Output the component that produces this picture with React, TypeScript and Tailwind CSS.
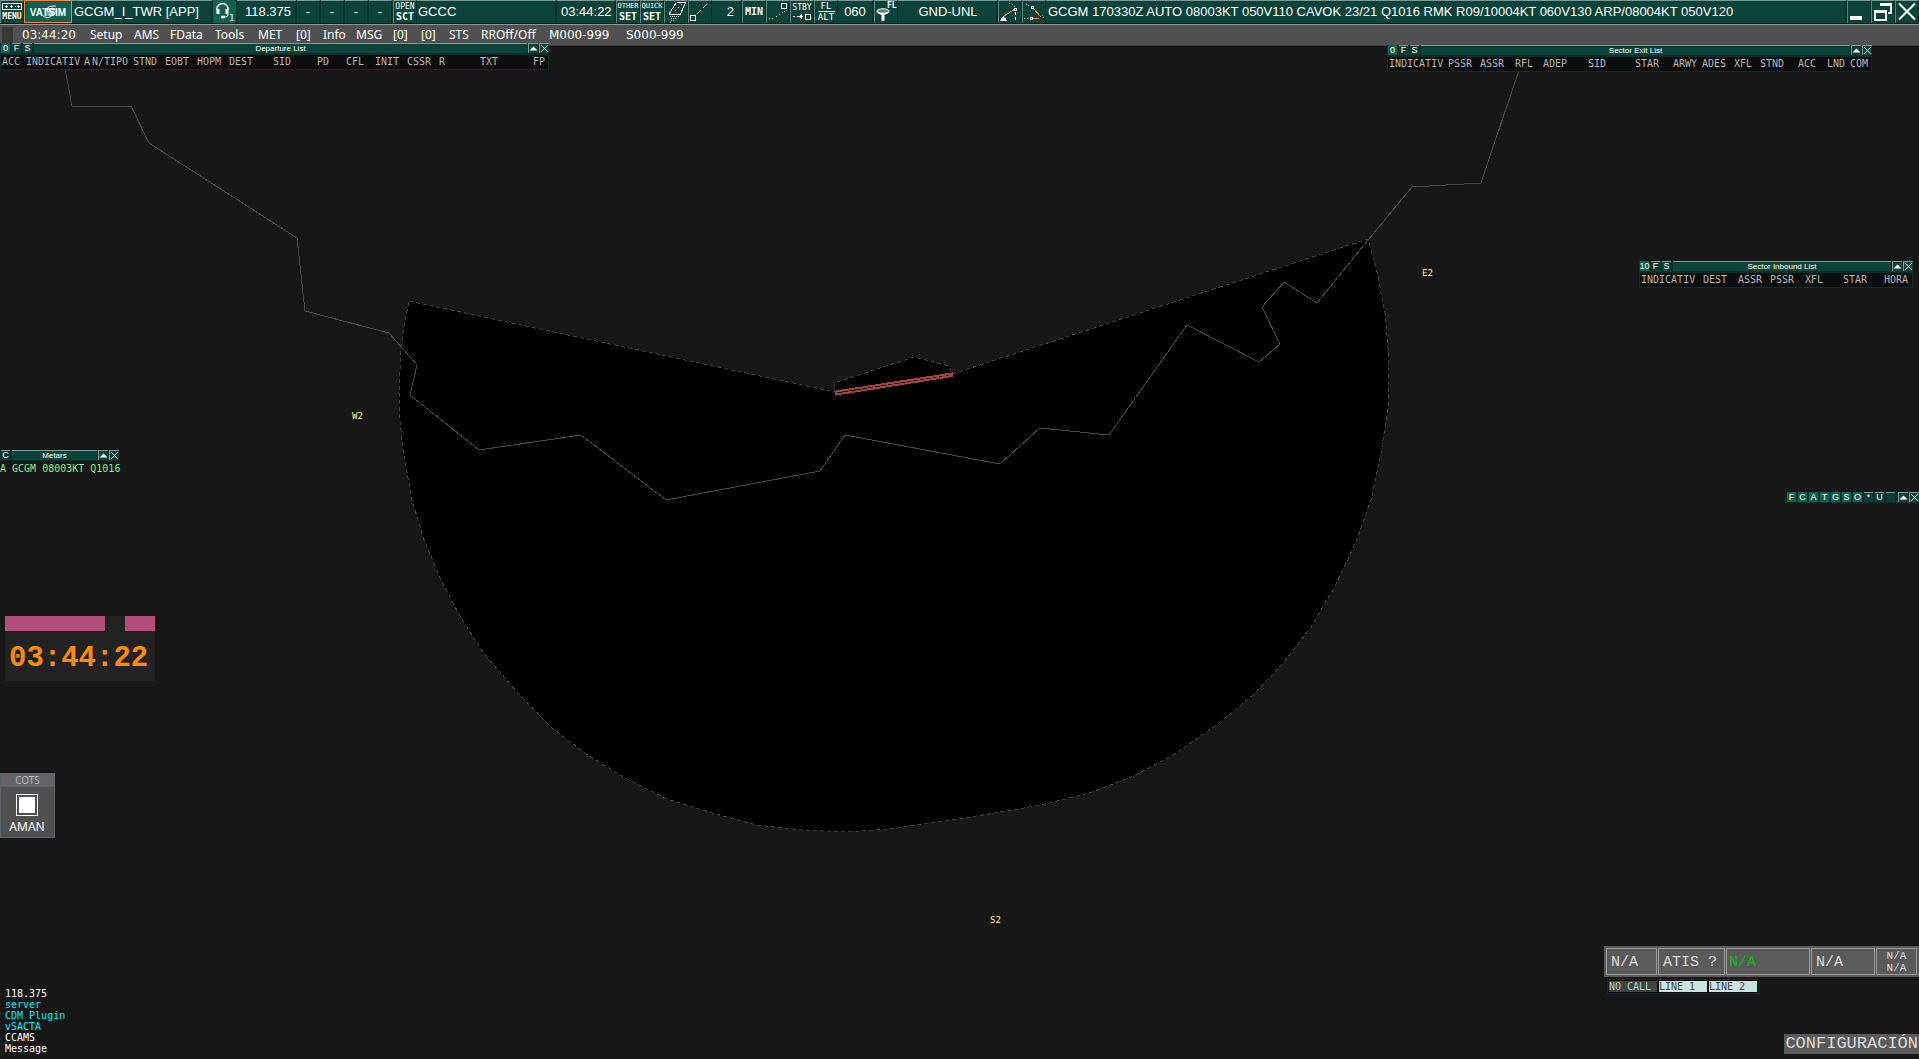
import type { ReactNode } from 'react'
import clsx from 'clsx'

interface Column {
  label: string
  width: string
}

const DEPARTURE_COLUMNS: Column[] = [
  { label: 'ACC', width: 'w-[24px]' },
  { label: 'INDICATIV', width: 'w-[58px]' },
  { label: 'A', width: 'w-[8px]' },
  { label: 'N/TIPO', width: 'w-[41px]' },
  { label: 'STND', width: 'w-[32px]' },
  { label: 'EOBT', width: 'w-[32px]' },
  { label: 'HOPM', width: 'w-[32px]' },
  { label: 'DEST', width: 'w-[44px]' },
  { label: 'SID', width: 'w-[44px]' },
  { label: 'PD', width: 'w-[29px]' },
  { label: 'CFL', width: 'w-[29px]' },
  { label: 'INIT', width: 'w-[32px]' },
  { label: 'CSSR', width: 'w-[32px]' },
  { label: 'R', width: 'w-[41px]' },
  { label: 'TXT', width: 'w-[53px]' },
  { label: 'FP', width: 'w-[15px]' },
]

const EXIT_COLUMNS: Column[] = [
  { label: 'INDICATIV', width: 'w-[59px]' },
  { label: 'PSSR', width: 'w-[32px]' },
  { label: 'ASSR', width: 'w-[35px]' },
  { label: 'RFL', width: 'w-[28px]' },
  { label: 'ADEP', width: 'w-[45px]' },
  { label: 'SID', width: 'w-[47px]' },
  { label: 'STAR', width: 'w-[38px]' },
  { label: 'ARWY', width: 'w-[29px]' },
  { label: 'ADES', width: 'w-[32px]' },
  { label: 'XFL', width: 'w-[26px]' },
  { label: 'STND', width: 'w-[38px]' },
  { label: 'ACC', width: 'w-[29px]' },
  { label: 'LND', width: 'w-[23px]' },
  { label: 'COM', width: 'w-[21px]' },
]

const INBOUND_COLUMNS: Column[] = [
  { label: 'INDICATIV', width: 'w-[62px]' },
  { label: 'DEST', width: 'w-[35px]' },
  { label: 'ASSR', width: 'w-[32px]' },
  { label: 'PSSR', width: 'w-[35px]' },
  { label: 'XFL', width: 'w-[38px]' },
  { label: 'STAR', width: 'w-[41px]' },
  { label: 'HORA', width: 'w-[28px]' },
]

const MENU_ITEMS = ['Setup', 'AMS', 'FData', 'Tools', 'MET', '[0]', 'Info', 'MSG', '[0]', '[0]', 'STS', 'RROff/Off']

const MESSAGES = [
  { text: '118.375', color: 'text-white' },
  { text: 'server', color: 'text-[#00f0f0]' },
  { text: 'CDM Plugin', color: 'text-[#00f0f0]' },
  { text: 'vSACTA', color: 'text-[#00f0f0]' },
  { text: 'CCAMS', color: 'text-white' },
  { text: 'Message', color: 'text-white' },
]

const FILTERS = ['F', 'C', 'A', 'T', 'G', 'S', 'O', '*', 'U', '']

const SANS = "font-['Liberation_Sans',sans-serif]"
const MONO = "font-['DejaVu_Sans_Mono',monospace]"
const COURIER = "font-['Liberation_Mono',monospace]"

/* ---------- top bar ---------- */

function Field({ width, children }: { width: string; children: ReactNode }) {
  return (
    <div className={clsx(width, 'flex items-center border-t border-r-2 border-t-[#7a9a93] border-r-[#06302a] bg-[#0c4339] pb-0.5 whitespace-nowrap')}>
      {children}
    </div>
  )
}

function Tool({ label, lit, children }: { label: string; lit?: boolean; children: ReactNode }) {
  return (
    <button
      aria-label={label}
      className={clsx(
        MONO,
        'flex w-6 shrink-0 flex-col items-center justify-center overflow-hidden border-r border-r-[#06302a]',
        lit ? 'bg-[#12604f]' : 'border-t border-l border-t-[#7a9a93] border-l-[#5e837b] bg-[#0c4339]'
      )}
    >
      {children}
    </button>
  )
}

function Icon({ children }: { children: ReactNode }) {
  return (
    <svg viewBox="0 0 22 22" className="h-[22px] w-[22px] shrink-0" fill="none" stroke="#fff" strokeWidth="1" shapeRendering="crispEdges">
      {children}
    </svg>
  )
}

function TopBar() {
  return (
    <header className={clsx(SANS, 'flex h-[23px] bg-[#06302a] text-[13px] leading-none text-white')}>
      <Tool label="Menu">
        <svg viewBox="0 0 20 8" className="h-2 w-5" fill="none" stroke="#fff" shapeRendering="crispEdges">
          <rect x="0.5" y="0.5" width="19" height="6" />
          <path d="M3 3.5h3M8 3.5h3M13 3.5h1M15 3.5h3M4.5 2v3M9.5 2v3M16.5 2v3" />
        </svg>
        <span className="mt-px text-[8px] leading-[9px] font-bold">MENU</span>
      </Tool>
      <button className="w-12 shrink-0 border border-[#f5873d] bg-[#12604f]" aria-label="VATSIM">
        <svg viewBox="0 0 46 21" className="h-[21px] w-[46px]">
          <ellipse cx="26" cy="11" rx="6" ry="4" fill="#a9cdc4" opacity="0.6" transform="rotate(-25 26 11)" />
          <text x="23" y="15" textAnchor="middle" fontSize="10" fontWeight="700" fill="#fff">VATSIM</text>
          <path d="M18 15c4 3 10 1 9-2s-6-2-5-5 5-3 9-3M20 9c3-1 7-2 10-1" fill="none" stroke="#fff" />
        </svg>
      </button>
      <Field width="w-[141px] pl-0.5">GCGM_I_TWR [APP]</Field>
      <Tool label="Voice" lit>
        <svg viewBox="0 0 22 22" className="h-[22px] w-[22px]" fill="none" stroke="#fff">
          <path d="M3 9V8a5.500 5.500 0 0 1 11 0v1" strokeWidth="1.500" />
          <path d="M4 8v5M13 8v5" strokeWidth="3" />
          <path d="M14 13v1c0 1.500-2 2-4 2" strokeWidth="1" />
          <path d="M7 16h4" strokeWidth="2.500" />
          <text x="15" y="20" fontSize="9" fill="#fff" stroke="none">1</text>
        </svg>
      </Tool>
      <Field width="w-[60px] pl-2">118.375</Field>
      <Field width="w-6 justify-center">-</Field>
      <Field width="w-6 justify-center">-</Field>
      <Field width="w-6 justify-center">-</Field>
      <Field width="w-6 justify-center">-</Field>
      <Tool label="Open sector file">
        <span className="text-[8px] leading-[9px]">OPEN</span>
        <span className="text-[10px] leading-[11px] font-bold">SCT</span>
      </Tool>
      <Field width="w-[140px] pl-px">GCCC</Field>
      <Field width="w-[59px] pl-1">03:44:22</Field>
      <Tool label="Other settings">
        <span className="text-[7px] leading-[9px]">OTHER</span>
        <span className="text-[10px] leading-[11px] font-bold">SET</span>
      </Tool>
      <Tool label="Quick settings">
        <span className="text-[7px] leading-[9px]">QUICK</span>
        <span className="text-[10px] leading-[11px] font-bold">SET</span>
      </Tool>
      <Tool label="Map layers">
        <Icon>
          <path d="M11.500 1.500h9M20.500 1.500L15.500 13M4 13l7-11" />
          <path d="M10 10L17 3" strokeDasharray="2 2" />
          <path d="M4 13.500h12" />
          <path d="M5 15.500h10M6 17.500h6M6 19.500h3M5 21.500h2" strokeDasharray="1 1" />
        </Icon>
      </Tool>
      <Tool label="Leader line">
        <Icon>
          <rect x="1.500" y="14.500" width="5" height="5" />
          <path d="M8 13L19 2" strokeDasharray="6 2" />
        </Icon>
      </Tool>
      <Field width="w-[30px] justify-end pr-1.5">2</Field>
      <Tool label="Minutes">
        <span className="text-[10px] font-bold">MIN</span>
      </Tool>
      <Tool label="History dots">
        <Icon>
          <rect x="14.500" y="2.500" width="5" height="5" />
          <path d="M2 17.500h1M5 17.500h1M9 15.500h1M12 13.500h1M15 11.500h1M17 10.500h1" />
        </Icon>
      </Tool>
      <Tool label="Standby">
        <span className="text-[8px] leading-[9px]">STBY</span>
        <svg viewBox="0 0 20 9" className="h-[9px] w-5" fill="none" stroke="#fff" shapeRendering="crispEdges">
          <path d="M1 4.500h2M5 4.500h6M9.500 2v5M8.500 3v3" />
          <rect x="13.500" y="2.500" width="5" height="5" />
        </svg>
      </Tool>
      <Tool label="Flight level or altitude">
        <span className="text-[9px] leading-[9px]">FL</span>
        <span className="w-[17px] border-t border-white pt-px text-center text-[9px] leading-[9px]">ALT</span>
      </Tool>
      <Field width="w-9 justify-center">060</Field>
      <Tool label="Level filter">
        <svg viewBox="0 0 22 22" className="h-[22px] w-[22px]">
          <path d="M1.500 10.500C1.500 13 6 13 6.500 14v6h3v-6c.5-1 5-1 5-3.500z" fill="#fff" />
          <ellipse cx="8" cy="10" rx="6" ry="2.200" fill="#5e837b" stroke="#fff" />
          <text x="12" y="7" fontSize="8" fontWeight="700" fill="#fff">FL</text>
        </svg>
      </Tool>
      <Field width="w-[100px] justify-center pl-0.5">GND-UNL</Field>
      <Tool label="Distance tool">
        <Icon>
          <path d="M5 15L16 8" stroke="#f5873d" />
          <path d="M1 19.500h7M2 18.500h5M2 17.500h5M3 16.500h3M4 15.500h1" />
          <rect x="15.500" y="7.500" width="2" height="2" />
          <path d="M16.500 11v9" strokeDasharray="3 2" />
          <path d="M10 2.500h1M13 3.500h1M15 5.500h1" />
        </Icon>
      </Tool>
      <Tool label="Conflict tool">
        <Icon>
          <path d="M11 8l6 7" stroke="#f5873d" />
          <path d="M10 17.500h6M17 15.500h1M19 14.500h1M20 16.500h1" stroke="#f5873d" />
          <rect x="8.500" y="5.500" width="2" height="2" />
          <rect x="7.500" y="16.500" width="2" height="2" />
          <path d="M3 3.500h1M5 4.500h1M1 17.500h1M4 17.500h1" />
        </Icon>
      </Tool>
      <Field width="min-w-0 flex-1 overflow-hidden pl-0.5">
        GCGM 170330Z AUTO 08003KT 050V110 CAVOK 23/21 Q1016 RMK R09/10004KT 060V130 ARP/08004KT 050V120
      </Field>
      <Tool label="Minimize">
        <Icon>
          <path d="M2 17h12" strokeWidth="4" />
        </Icon>
      </Tool>
      <Tool label="Restore">
        <Icon>
          <path d="M9 5V3h10v9h-3" strokeWidth="2" />
          <path d="M9 3h11" strokeWidth="3" />
          <rect x="3" y="10" width="11" height="9" strokeWidth="2" />
          <path d="M2 10h13" strokeWidth="3" />
        </Icon>
      </Tool>
      <Tool label="Close">
        <svg viewBox="0 0 22 22" className="h-[22px] w-[22px]" stroke="#fff" strokeWidth="2">
          <path d="M3 2.500l16 16M19 2.500l-16 16" />
        </svg>
      </Tool>
    </header>
  )
}

function MenuBar() {
  return (
    <nav
      className="grid h-[22px] grid-cols-[20px_68px_44px_36px_45px_43px_38px_27px_33px_37px_28px_28px_32px_68px_77px_auto] items-center justify-items-start border-t border-b border-t-[#8b9a97] border-b-[#3c3c3c] bg-[#505050] pl-0.5 font-['Noto_Sans',sans-serif] text-[12px] leading-4 whitespace-nowrap text-white"
    >
      <span className="h-4 w-[11px] bg-[#383838]" />
      <span className="font-['DejaVu_Sans',sans-serif]">03:44:20</span>
      {MENU_ITEMS.map((item, i) => (
        <button key={i}>{item}</button>
      ))}
      <button className="font-['DejaVu_Sans',sans-serif]">M000-999</button>
      <button className="font-['DejaVu_Sans',sans-serif]">S000-999</button>
    </nav>
  )
}

/* ---------- floating windows ---------- */

function TitleButton({ label, lit }: { label: string; lit?: boolean }) {
  return (
    <button
      className={clsx(
        'mr-[2px] flex h-[10px] w-[9px] items-center justify-center text-[9px] leading-[9px]',
        lit ? 'bg-[#12604f]' : 'border-t border-[#7a9a93] bg-[#0a3c33]'
      )}
    >
      {label}
    </button>
  )
}

function WindowButtons() {
  return (
    <>
      <button aria-label="Collapse" className="ml-px h-[10px] w-[10px] border-t border-l border-[#7a9a93] bg-[#0c4339]">
        <svg viewBox="0 0 9 9" className="h-[9px] w-[9px]" fill="#fff">
          <path d="M0.500 6.500L4.500 2.500L8.500 6.500z" />
        </svg>
      </button>
      <button aria-label="Close" className="ml-px h-[10px] w-[10px] border-t border-l border-[#7a9a93] bg-[#0c4339]">
        <svg viewBox="0 0 9 9" className="h-[9px] w-[9px]" stroke="#fff">
          <path d="M1 1l7 7M8 1l-7 7" />
        </svg>
      </button>
    </>
  )
}

function TitleBar({ title, flags }: { title: string; flags: { label: string; lit?: boolean }[] }) {
  return (
    <div className={clsx(SANS, 'flex h-[11px] bg-[#06302a] pl-px text-[8px] leading-[9px] text-white')}>
      {flags.map((flag) => (
        <TitleButton key={flag.label} {...flag} />
      ))}
      <span className="h-[10px] flex-1 border-t border-[#7a9a93] bg-[#0c4339] text-center leading-[9px]">{title}</span>
      <WindowButtons />
    </div>
  )
}

function ListWindow({ title, count, columns, className }: { title: string; count: string; columns: Column[]; className: string }) {
  return (
    <section className={clsx('absolute', className)}>
      <TitleBar title={title} flags={[{ label: count, lit: true }, { label: 'F' }, { label: 'S' }]} />
      <div className="border border-[#06302a] bg-[#0d0d0d] pl-px">
        <table className={clsx(MONO, 'table-fixed border-collapse text-[10px] leading-[14px] text-[#b4b4b0]')}>
          <thead>
            <tr>
              {columns.map((col) => (
                <th key={col.label} className={clsx(col.width, 'p-0 text-left font-normal whitespace-nowrap')}>
                  {col.label}
                </th>
              ))}
            </tr>
          </thead>
        </table>
      </div>
    </section>
  )
}

/* ---------- radar ---------- */

function RadarMap() {
  return (
    <svg viewBox="0 0 1919 1059" className="absolute inset-0 h-full w-full" fill="none" shapeRendering="crispEdges">
      {/* control zone */}
      <path
        d="M409 301L835 392L834 383L914 357L949 366L952 374L1368 239L1377 272L1385 313L1389 360L1388 407L1381 453L1371 500L1356 542L1334 588L1311 627L1284 662L1253 695L1214 727L1173 755L1134 776L1089 793L1041 805L989 814L931 823L889 829L844 832L802 830L757 825L712 813L667 799L625 778L586 754L551 727L516 691L483 652L461 618L440 578L423 537L412 500L403 450L400 420L399 393L401 348L404 326Z"
        fill="#000"
        stroke="#404040"
        strokeDasharray="4 3"
      />
      {/* coast line */}
      <path
        d="M65 68L72 106H131L149 143L297 238L305 311L389 333L417 365L410 395L479 450L581 435L666 500L820 471L845 435L1000 464L1040 428L1109 435L1187 325L1259 362L1280 344L1262 307L1284 282L1317 303L1368 240L1412 187L1481 183L1519 70"
        stroke="#484848"
      />
      {/* runway */}
      <path d="M836 391.500L952 373.500V376L836 394.500Z" stroke="#a64444" strokeWidth="2" />
      <g fill="#ffff80" fontFamily="'DejaVu Sans Mono', monospace" fontSize="9">
        <text x="1422" y="276">E2</text>
        <text x="352" y="419">W2</text>
        <text x="990" y="923">S2</text>
      </g>
    </svg>
  )
}

function AtisCell({ className, children }: { className: string; children: ReactNode }) {
  return <button className={clsx('flex items-center border border-[#999] pt-0.5 text-[15px] leading-none', className)}>{children}</button>
}

export default function App() {
  return (
    <div className="relative min-h-screen overflow-hidden bg-[#171717]">
      <RadarMap />

      <div className="relative">
        <TopBar />
        <div className="h-px bg-[#041f1b]" />
        <MenuBar />
      </div>

      <ListWindow title="Departure List" count="0" columns={DEPARTURE_COLUMNS} className="top-[43px] left-0" />
      <ListWindow title="Sector Exit List" count="0" columns={EXIT_COLUMNS} className="top-[45px] right-[47px]" />
      <ListWindow title="Sector Inbound List" count="10" columns={INBOUND_COLUMNS} className="top-[261px] right-[6px]" />

      <section className="absolute top-[450px] left-0 w-[119px]">
        <TitleBar title="Metars" flags={[{ label: 'C' }]} />
        <p className={clsx(MONO, 'mt-px text-[10px] leading-[14px] whitespace-nowrap text-[#86f28c]')}>A GCGM 08003KT Q1016</p>
      </section>

      <section className={clsx(SANS, 'absolute top-[492px] right-0 flex h-[11px] bg-[#06302a] pl-0.5 text-white')}>
        {FILTERS.map((f, i) => (
          <TitleButton key={i} label={f} lit={i < 7} />
        ))}
        <WindowButtons />
      </section>

      <section className="absolute top-[616px] left-[5px] w-[150px] bg-[#222]">
        <div className="flex h-[15px] justify-between">
          <span className="w-[100px] bg-[#b34e79]" />
          <span className="w-[30px] bg-[#b34e79]" />
        </div>
        <time className={clsx(COURIER, 'block h-[50px] pl-1 text-[29px] leading-[56px] font-bold text-[#ff8c00]')}>03:44:22</time>
      </section>

      <section className="absolute top-[773px] left-0 w-[55px] border border-[#5a6468] bg-[#505050] font-['Noto_Sans',sans-serif]">
        <h2 className="border-b border-[#5a6468] bg-[#646367] text-center text-[10px] leading-3 text-[#b8b8b4]">COTS</h2>
        <label className="flex flex-col items-center pt-[7px] pr-px text-[12px] leading-[21px] text-white">
          <input type="checkbox" className="h-[22px] w-[22px] appearance-none border border-white bg-white bg-clip-content p-0.5" />
          <span>AMAN</span>
        </label>
      </section>

      <ul className={clsx(MONO, 'absolute bottom-[5px] left-[5px] text-[10px] leading-[11px]')}>
        {MESSAGES.map((m) => (
          <li key={m.text} className={m.color}>{m.text}</li>
        ))}
      </ul>

      <section className={clsx(COURIER, 'absolute right-0 bottom-[5px] flex w-[315px] flex-col text-[#dcdcdc]')}>
        <div className="flex h-[31px] gap-px bg-[#5a5a5a] p-0.5">
          <AtisCell className="w-[51px] pl-1">N/A</AtisCell>
          <AtisCell className="w-[67px] pl-1">ATIS ?</AtisCell>
          <AtisCell className="w-[84px] pl-0.5 text-[#12b812]">N/A</AtisCell>
          <AtisCell className="w-16 pl-1">N/A</AtisCell>
          <button className="flex-1 border border-[#999] text-[11px] leading-3">
            N/A
            <br />
            N/A
          </button>
        </div>
        <div className={clsx(MONO, 'mt-0.5 ml-[3px] flex gap-0.5 self-start border border-[#06302a] bg-[#0d0d0d] p-px text-[10px] leading-[11px]')}>
          <button className="w-12 bg-[#3e4543] text-left text-[#b5cfc8]">NO CALL</button>
          <button className="w-12 bg-[#cbe3de] text-left text-[#3e4543]">LINE 1</button>
          <button className="w-12 bg-[#cbe3de] text-left text-[#3e4543]">LINE 2</button>
        </div>
        <button className="mt-10 self-end bg-[#5a5a5a] px-px text-[17px] leading-5">CONFIGURACIÓN</button>
      </section>
    </div>
  )
}
